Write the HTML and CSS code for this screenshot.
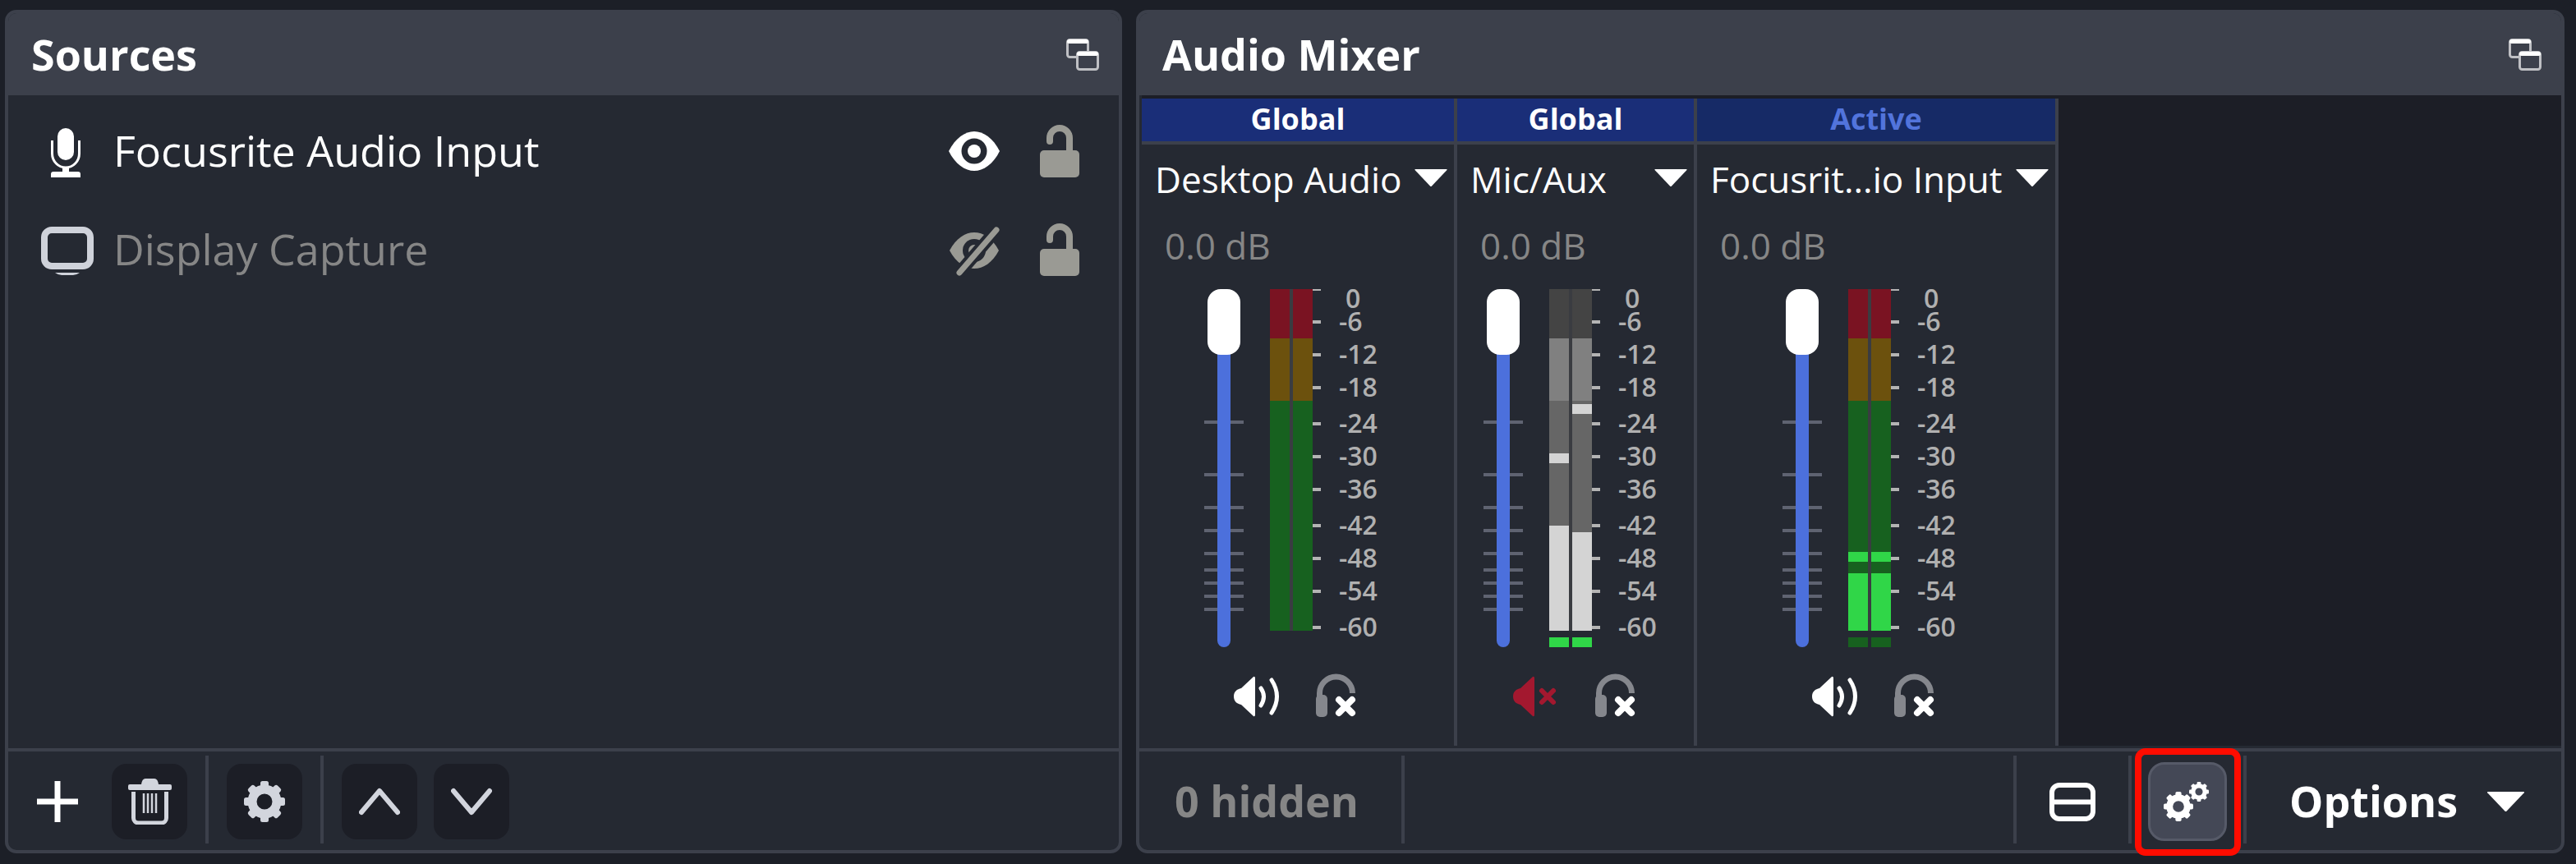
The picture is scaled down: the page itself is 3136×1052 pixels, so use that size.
FILE: index.html
```html
<!DOCTYPE html>
<html lang="en">
<head>
    <meta charset="UTF-8">
    <title>Sources and Audio Mixer</title>
    <link rel="stylesheet" href="styles.css">
</head>
<body>
    <!-- shared icons -->
    <svg class="sprite">
        <defs>
            <symbol id="gear" viewBox="0 0 50 50">
                <circle cx="25" cy="25" r="15" fill="none" stroke="currentColor" stroke-width="11"/>
                <g fill="currentColor">
                    <rect x="20" y="0" width="10" height="10" rx="2.5"/>
                    <rect x="20" y="0" width="10" height="10" rx="2.5" transform="rotate(45 25 25)"/>
                    <rect x="20" y="0" width="10" height="10" rx="2.5" transform="rotate(90 25 25)"/>
                    <rect x="20" y="0" width="10" height="10" rx="2.5" transform="rotate(135 25 25)"/>
                    <rect x="20" y="0" width="10" height="10" rx="2.5" transform="rotate(180 25 25)"/>
                    <rect x="20" y="0" width="10" height="10" rx="2.5" transform="rotate(225 25 25)"/>
                    <rect x="20" y="0" width="10" height="10" rx="2.5" transform="rotate(270 25 25)"/>
                    <rect x="20" y="0" width="10" height="10" rx="2.5" transform="rotate(315 25 25)"/>
                </g>
            </symbol>
            <symbol id="dock" viewBox="0 0 40 39">
                <rect x="1.5" y="1.5" width="25" height="21" rx="3" fill="none" stroke="#bfc0c4" stroke-width="3"/>
                <rect x="1" y="1" width="26" height="5" rx="2.5" fill="#fff"/>
                <rect x="13.5" y="16.5" width="25" height="21" rx="3" fill="#3c404b" stroke="#bfc0c4" stroke-width="3"/>
                <rect x="13" y="16" width="26" height="5" rx="2.5" fill="#fff"/>
            </symbol>
            <symbol id="caret" viewBox="0 0 40 21">
                <path d="M1 0h38q1 0 .5 1L21 20.500q-1 1-2 0L.5 1Q0 0 1 0z" fill="currentColor"/>
            </symbol>
            <symbol id="lock" viewBox="0 0 70 80">
                <path d="M23 29v-4a12 12 0 0 1 24 0v20" fill="none" stroke="#9a9a94" stroke-width="8" stroke-linecap="round"/>
                <rect x="11" y="40" width="48" height="33" rx="5" fill="#9a9a94"/>
            </symbol>
            <symbol id="fader" viewBox="0 0 48 436">
                <path d="M0 162h48M0 226h48M0 266h48M0 294h48M0 322h48M0 342h48M0 358h48M0 374h48M0 390h48" stroke="#5f6371" stroke-width="4"/>
                <rect x="16" y="20" width="16" height="416" rx="8" fill="#4c70dc"/>
                <rect x="4" y="0" width="40" height="80" rx="16" fill="#fff"/>
            </symbol>
            <symbol id="speaker" viewBox="0 0 56 50">
                <path d="M0 25c0-6 4-9 9-10L24 1q2-1 2 2v44q0 3-2 2L9 35c-5-1-9-4-9-10z" fill="currentColor"/>
                <path d="M33 15q7 10 0 21M46 5q13 20 0 40" fill="none" stroke="currentColor" stroke-width="5" stroke-linecap="round"/>
            </symbol>
            <symbol id="speaker-off" viewBox="0 0 56 50">
                <path d="M0 25c0-6 4-9 9-10L24 1q2-1 2 2v44q0 3-2 2L9 35c-5-1-9-4-9-10z" fill="currentColor"/>
                <path d="M35 18l14 14M49 18L35 32" fill="none" stroke="currentColor" stroke-width="6" stroke-linecap="round"/>
            </symbol>
            <symbol id="monitor-off" viewBox="0 0 49 53">
                <path d="M4.500 30v-6a20 20 0 0 1 40 0" fill="none" stroke="#85878d" stroke-width="7"/>
                <rect x="0" y="26" width="14" height="27" rx="5" fill="#85878d"/>
                <path d="M28 32l16 16M44 32L28 48" stroke="#252932" stroke-width="15" stroke-linecap="round"/>
                <path d="M28 32l16 16M44 32L28 48" stroke="#fff" stroke-width="8" stroke-linecap="round"/>
            </symbol>
        </defs>
    </svg>

    <section class="panel panel-sources">
        <header class="panel-head">
            <h2>Sources</h2>
            <svg class="dock-icon"><use href="#dock"/></svg>
        </header>
        <div class="source-list">
            <div class="source-row">
                <svg class="row-icon" viewBox="0 0 70 80">
                    <rect x="24" y="13" width="20" height="39" rx="10" fill="#fff"/>
                    <path d="M17.500 28v16a16.500 17 0 0 0 33 0V28" fill="none" stroke="#fff" stroke-width="3"/>
                    <rect x="30" y="60" width="8" height="8" fill="#fff"/>
                    <path d="M16 73v-4q0-3 3-3h30q3 0 3 3v4z" fill="#fff"/>
                </svg>
                <span class="source-name">Focusrite Audio Input</span>
                <svg class="row-icon eye" viewBox="0 0 70 80">
                    <path d="M4 41C12 25 24 17 35 17s23 8 31 24C58 57 46 65 35 65S12 57 4 41z" fill="#fff"/>
                    <circle cx="35" cy="41" r="15.500" fill="#252932"/>
                    <circle cx="35" cy="41" r="8" fill="#fff"/>
                </svg>
                <svg class="row-icon"><use href="#lock"/></svg>
            </div>
            <div class="source-row row-hidden">
                <svg class="row-icon" viewBox="0 0 70 80">
                    <rect x="8" y="17" width="56" height="44" rx="9" fill="none" stroke="#cfd2da" stroke-width="8"/>
                    <path d="M21 69h30q-4 3-8 3H29q-4 0-8-3z" fill="#cfd2da"/>
                </svg>
                <span class="source-name">Display Capture</span>
                <svg class="row-icon eye" viewBox="0 0 70 80">
                    <path d="M5 42C13 27 24 20 35 20s22 7 30 22C57 57 46 64 35 64S13 57 5 42z" fill="#9a9a94"/>
                    <circle cx="35" cy="42" r="14" fill="#252932"/>
                    <circle cx="35" cy="42" r="7" fill="#9a9a94"/>
                    <path d="M17 69L62 17" stroke="#252932" stroke-width="15"/>
                    <path d="M17 69L62 17" stroke="#9a9a94" stroke-width="7" stroke-linecap="round"/>
                </svg>
                <svg class="row-icon"><use href="#lock"/></svg>
            </div>
        </div>
        <footer class="panel-foot foot-sources">
            <button class="tool tool-plain">
                <svg class="icon-50" viewBox="0 0 50 50"><path d="M25 0v50M0 25h50" stroke="#fff" stroke-width="7"/></svg>
            </button>
            <button class="tool">
                <svg class="icon-56" viewBox="0 0 56 56">
                    <path d="M18 7q1-7 5-7h11q4 0 5 7z" fill="#d2d5dd"/>
                    <rect x="2" y="7" width="53" height="7" rx="2" fill="#d2d5dd"/>
                    <path d="M8.500 16v32a6 6 0 0 0 6 6h28a6 6 0 0 0 6-6V16" fill="none" stroke="#d2d5dd" stroke-width="5"/>
                    <path d="M21 18v24M26 18v24M31 18v24M36 18v24" stroke="#d2d5dd" stroke-width="2.500"/>
                </svg>
            </button>
            <span class="foot-sep"></span>
            <button class="tool tool-gear"><svg class="icon-50"><use href="#gear"/></svg></button>
            <span class="foot-sep"></span>
            <button class="tool">
                <svg class="icon-50" viewBox="0 0 50 50"><path d="M3 38L25 12l22 26" fill="none" stroke="#d2d5dd" stroke-width="6" stroke-linecap="round" stroke-linejoin="round"/></svg>
            </button>
            <button class="tool">
                <svg class="icon-50" viewBox="0 0 50 50"><path d="M3 12l22 26 22-26" fill="none" stroke="#d2d5dd" stroke-width="6" stroke-linecap="round" stroke-linejoin="round"/></svg>
            </button>
        </footer>
    </section>

    <section class="panel panel-mixer">
        <header class="panel-head">
            <h2>Audio Mixer</h2>
            <svg class="dock-icon"><use href="#dock"/></svg>
        </header>
        <div class="mixer-scroll">
            <!-- Desktop Audio -->
            <div class="channel ch-desktop">
                <div class="ch-status">Global</div>
                <div class="ch-name"><span>Desktop Audio</span><svg class="caret"><use href="#caret"/></svg></div>
                <div class="ch-db">0.0 dB</div>
                <div class="strip">
                    <svg class="fader"><use href="#fader"/></svg>
                    <div class="meter">
                        <div class="meter-bars">
                            <div class="bar"><i class="seg s-red" style="height:60px"></i><i class="seg s-yel" style="height:76px"></i><i class="seg s-grn" style="height:280px"></i></div>
                            <div class="bar"><i class="seg s-red" style="height:60px"></i><i class="seg s-yel" style="height:76px"></i><i class="seg s-grn" style="height:280px"></i></div>
                        </div>
                    </div>
                    <div class="scale">
                        <div class="mark mark-zero"><b></b><span>0</span></div>
                        <div class="mark"><b></b><span>-6</span></div>
                        <div class="mark"><b></b><span>-12</span></div>
                        <div class="mark tall"><b></b><span>-18</span></div>
                        <div class="mark"><b></b><span>-24</span></div>
                        <div class="mark"><b></b><span>-30</span></div>
                        <div class="mark tall"><b></b><span>-36</span></div>
                        <div class="mark"><b></b><span>-42</span></div>
                        <div class="mark"><b></b><span>-48</span></div>
                        <div class="mark tall"><b></b><span>-54</span></div>
                        <div class="mark"><b></b><span>-60</span></div>
                    </div>
                </div>
                <div class="ch-buttons">
                    <svg class="speaker"><use href="#speaker"/></svg>
                    <svg class="phones"><use href="#monitor-off"/></svg>
                </div>
            </div>

            <!-- Mic/Aux, muted -->
            <div class="channel ch-mic">
                <div class="ch-status">Global</div>
                <div class="ch-name"><span>Mic/Aux</span><svg class="caret"><use href="#caret"/></svg></div>
                <div class="ch-db">0.0 dB</div>
                <div class="strip">
                    <svg class="fader"><use href="#fader"/></svg>
                    <div class="meter">
                        <div class="meter-bars">
                            <div class="bar"><i class="seg s-off" style="height:60px"></i><i class="seg s-mid" style="height:76px"></i><i class="seg s-low" style="height:64px"></i><i class="seg s-lit" style="height:12px"></i><i class="seg s-low" style="height:76px"></i><i class="seg s-lit" style="height:128px"></i></div>
                            <div class="bar"><i class="seg s-off" style="height:60px"></i><i class="seg s-mid" style="height:76px"></i><i class="seg s-low" style="height:4px"></i><i class="seg s-lit" style="height:12px"></i><i class="seg s-low" style="height:144px"></i><i class="seg s-lit" style="height:120px"></i></div>
                        </div>
                        <div class="meter-in"><i class="seg s-hot"></i><i class="seg s-hot"></i></div>
                    </div>
                    <div class="scale">
                        <div class="mark mark-zero"><b></b><span>0</span></div>
                        <div class="mark"><b></b><span>-6</span></div>
                        <div class="mark"><b></b><span>-12</span></div>
                        <div class="mark tall"><b></b><span>-18</span></div>
                        <div class="mark"><b></b><span>-24</span></div>
                        <div class="mark"><b></b><span>-30</span></div>
                        <div class="mark tall"><b></b><span>-36</span></div>
                        <div class="mark"><b></b><span>-42</span></div>
                        <div class="mark"><b></b><span>-48</span></div>
                        <div class="mark tall"><b></b><span>-54</span></div>
                        <div class="mark"><b></b><span>-60</span></div>
                    </div>
                </div>
                <div class="ch-buttons">
                    <svg class="speaker muted"><use href="#speaker-off"/></svg>
                    <svg class="phones"><use href="#monitor-off"/></svg>
                </div>
            </div>

            <!-- Focusrite -->
            <div class="channel ch-focusrite">
                <div class="ch-status is-active">Active</div>
                <div class="ch-name"><span>Focusrit...io Input</span><svg class="caret"><use href="#caret"/></svg></div>
                <div class="ch-db">0.0 dB</div>
                <div class="strip">
                    <svg class="fader"><use href="#fader"/></svg>
                    <div class="meter">
                        <div class="meter-bars">
                            <div class="bar"><i class="seg s-red" style="height:60px"></i><i class="seg s-yel" style="height:76px"></i><i class="seg s-grn" style="height:184px"></i><i class="seg s-hot" style="height:12px"></i><i class="seg s-grn" style="height:14px"></i><i class="seg s-hot" style="height:70px"></i></div>
                            <div class="bar"><i class="seg s-red" style="height:60px"></i><i class="seg s-yel" style="height:76px"></i><i class="seg s-grn" style="height:184px"></i><i class="seg s-hot" style="height:12px"></i><i class="seg s-grn" style="height:14px"></i><i class="seg s-hot" style="height:70px"></i></div>
                        </div>
                        <div class="meter-in"><i class="seg s-grn"></i><i class="seg s-grn"></i></div>
                    </div>
                    <div class="scale">
                        <div class="mark mark-zero"><b></b><span>0</span></div>
                        <div class="mark"><b></b><span>-6</span></div>
                        <div class="mark"><b></b><span>-12</span></div>
                        <div class="mark tall"><b></b><span>-18</span></div>
                        <div class="mark"><b></b><span>-24</span></div>
                        <div class="mark"><b></b><span>-30</span></div>
                        <div class="mark tall"><b></b><span>-36</span></div>
                        <div class="mark"><b></b><span>-42</span></div>
                        <div class="mark"><b></b><span>-48</span></div>
                        <div class="mark tall"><b></b><span>-54</span></div>
                        <div class="mark"><b></b><span>-60</span></div>
                    </div>
                </div>
                <div class="ch-buttons">
                    <svg class="speaker"><use href="#speaker"/></svg>
                    <svg class="phones"><use href="#monitor-off"/></svg>
                </div>
            </div>
        </div>
        <footer class="panel-foot foot-mixer">
            <span class="hidden-count">0 hidden</span>
            <span class="foot-sep"></span>
            <span class="foot-fill"></span>
            <span class="foot-sep"></span>
            <button class="tool tool-plain">
                <svg class="layout-icon" viewBox="0 0 56 47">
                    <rect x="3" y="3" width="50" height="41" rx="9" fill="none" stroke="#fff" stroke-width="6"/>
                    <path d="M3 23.500h50" stroke="#fff" stroke-width="6"/>
                </svg>
            </button>
            <span class="foot-sep"></span>
            <button class="tool tool-active">
                <svg class="gears-icon" viewBox="0 0 64 64">
                    <use href="#gear" x="3" y="20" width="36" height="36"/>
                    <use href="#gear" x="34" y="8" width="24" height="24"/>
                </svg>
                <span class="highlight"></span>
            </button>
            <span class="foot-sep"></span>
            <span class="options">Options</span>
            <svg class="caret-big"><use href="#caret"/></svg>
        </footer>
    </section>
</body>
</html>
```

FILE: styles.css
```css
* {
    box-sizing: border-box;
}
html, body {
    height: 100%;
}
body {
    margin: 0;
    padding: 12px 14px 13px 6px;
    display: flex;
    gap: 17px;
    background: #1c1f27;
    color: #fff;
    font-family: "Open Sans", "Liberation Sans", sans-serif;
    overflow: hidden;
}
.sprite {
    display: none;
}

/* panels */
.panel {
    display: flex;
    flex-direction: column;
    background: #252932;
    border: 4px solid #3c404b;
    border-radius: 14px;
}
.panel-sources {
    width: 1360px;
}
.panel-mixer {
    flex: 1;
}
.panel-head {
    height: 100px;
    flex: none;
    display: flex;
    align-items: center;
    justify-content: space-between;
    padding: 0 24px 0 28px;
    background: #3c404b;
    border-radius: 10px 10px 0 0;
}
.panel-head h2 {
    margin: 0;
    font-size: 52px;
    font-weight: 700;
    line-height: 68px;
}
.dock-icon {
    width: 40px;
    height: 39px;
    color: #fff;
}

/* source list */
.source-list {
    flex: 1;
    padding: 7px 37px 0 36px;
}
.source-row {
    height: 120px;
    display: flex;
    align-items: center;
    font-size: 52px;
    line-height: 70px;
}
.row-icon {
    width: 70px;
    height: 80px;
    flex: none;
}
.source-name {
    flex: 1;
    margin-left: 22px;
}
.row-hidden .source-name {
    color: #868686;
}
.eye {
    margin-right: 34px;
}

/* footers */
.panel-foot {
    height: 124px;
    flex: none;
    display: flex;
    align-items: center;
    padding-top: 2px;
    border-top: 4px solid #3c404b;
    border-radius: 0 0 10px 10px;
}
.foot-sep {
    flex: none;
    align-self: flex-start;
    width: 4px;
    height: 107px;
    margin-top: 3px;
    background: #3c404b;
}
.tool {
    position: relative;
    flex: none;
    width: 92px;
    height: 92px;
    display: flex;
    align-items: center;
    justify-content: center;
    padding: 0;
    border: 0;
    border-radius: 18px;
    background: #1c1e26;
    color: #d2d5dd;
}
.tool-plain {
    background: none;
}
.foot-sources {
    padding-left: 14px;
    gap: 20px;
}
.foot-sources .foot-sep {
    margin-left: 2px;
    margin-right: 2px;
}
.icon-50 {
    width: 50px;
    height: 50px;
}
.icon-56 {
    width: 56px;
    height: 56px;
}

/* mixer */
.mixer-scroll {
    flex: 1;
    display: flex;
    margin-bottom: 3px;
    padding-top: 4px;
    background: #1c1e26;
    border-left: 3px solid #252932;
}
.channel {
    flex: none;
    display: flex;
    flex-direction: column;
    background: #252932;
    border-right: 4px solid #3c404b;
}
.ch-desktop {
    width: 384px;
}
.ch-mic {
    width: 292px;
}
.ch-focusrite {
    width: 440px;
}
.ch-status {
    height: 56px;
    flex: none;
    background: #1a2e78;
    border-bottom: 4px solid #3c404b;
    text-align: center;
    font-size: 36px;
    font-weight: 700;
    line-height: 50px;
}
.ch-status.is-active {
    background: #162a66;
    color: #5274dc;
}
.ch-name {
    display: flex;
    justify-content: space-between;
    padding: 12px 8px 0 16px;
    font-size: 44px;
    line-height: 60px;
    white-space: nowrap;
}
.caret {
    width: 40px;
    height: 21px;
    margin-top: 18px;
    color: #fff;
}
.ch-db {
    margin-top: 21px;
    padding-left: 28px;
    font-size: 44px;
    line-height: 60px;
    color: #868686;
}
.strip {
    display: flex;
    width: 228px;
    height: 436px;
    margin: 23px auto 0;
}
.ch-mic .strip {
    position: relative;
    left: 2px;
}
.ch-buttons {
    display: flex;
    align-items: flex-start;
    width: 228px;
    margin: 32px auto 0;
    padding-left: 36px;
}
.ch-mic .ch-buttons {
    position: relative;
    left: 2px;
}
.fader {
    flex: none;
    width: 48px;
    height: 436px;
    margin-right: 32px;
}
.meter {
    flex: none;
    width: 52px;
}
.meter-bars {
    display: flex;
    gap: 4px;
    background: #3a3c41;
}
.bar {
    flex: 1;
    display: flex;
    flex-direction: column;
}
.meter-in {
    display: flex;
    gap: 4px;
    height: 12px;
    margin-top: 8px;
}
.meter-in .seg {
    flex: 1;
}
.seg {
    display: block;
}
.s-red { background: #7a1322; }
.s-yel { background: #6c510d; }
.s-grn { background: #17611f; }
.s-hot { background: #30d648; }
.s-off { background: #444444; }
.s-mid { background: #808080; }
.s-low { background: #666666; }
.s-lit { background: #d4d4d4; }

/* dB scale next to the meter */
.mark {
    display: flex;
    align-items: flex-start;
    height: 40px;
    font-size: 32px;
    font-weight: 600;
    line-height: 30px;
    color: #b0b0b0;
}
.mark.tall {
    height: 44px;
}
.mark b {
    flex: none;
    width: 10px;
    height: 4px;
    margin-top: -2px;
    background: #b4b4b4;
}
.mark span {
    margin: -16px 0 0 22px;
}
.mark-zero b {
    height: 2px;
    margin-top: 0;
}
.mark-zero span {
    margin: -4px 0 0 30px;
}
.speaker {
    flex: none;
    width: 56px;
    height: 50px;
    margin: 3px 44px 0 0;
    color: #fff;
}
.speaker.muted {
    color: #a3182f;
}
.phones {
    flex: none;
    width: 49px;
    height: 53px;
}

/* mixer footer */
.foot-mixer {
    padding-right: 44px;
}
.hidden-count {
    width: 319px;
    margin-bottom: 3px;
    padding-left: 43px;
    font-size: 52px;
    font-weight: 700;
    line-height: 68px;
    color: #868686;
}
.foot-fill {
    flex: 1;
}
.foot-mixer .tool {
    margin: 0 22px;
}
.layout-icon {
    width: 56px;
    height: 47px;
}
.foot-mixer .tool-active {
    width: 96px;
    height: 96px;
    margin: 0 20px;
    background: #444856;
    border: 3px solid #565a68;
    border-radius: 20px;
    color: #fff;
}
.gears-icon {
    width: 64px;
    height: 64px;
    flex: none;
}
.highlight {
    position: absolute;
    left: -19px;
    top: -20px;
    width: 129px;
    height: 131px;
    border: 8px solid #ff0c00;
    border-radius: 13px;
}
.options {
    margin: 0 0 3px 52px;
    font-size: 52px;
    font-weight: 700;
    line-height: 68px;
}
.caret-big {
    width: 47px;
    height: 24px;
    margin-left: 35px;
    color: #fff;
}
```
